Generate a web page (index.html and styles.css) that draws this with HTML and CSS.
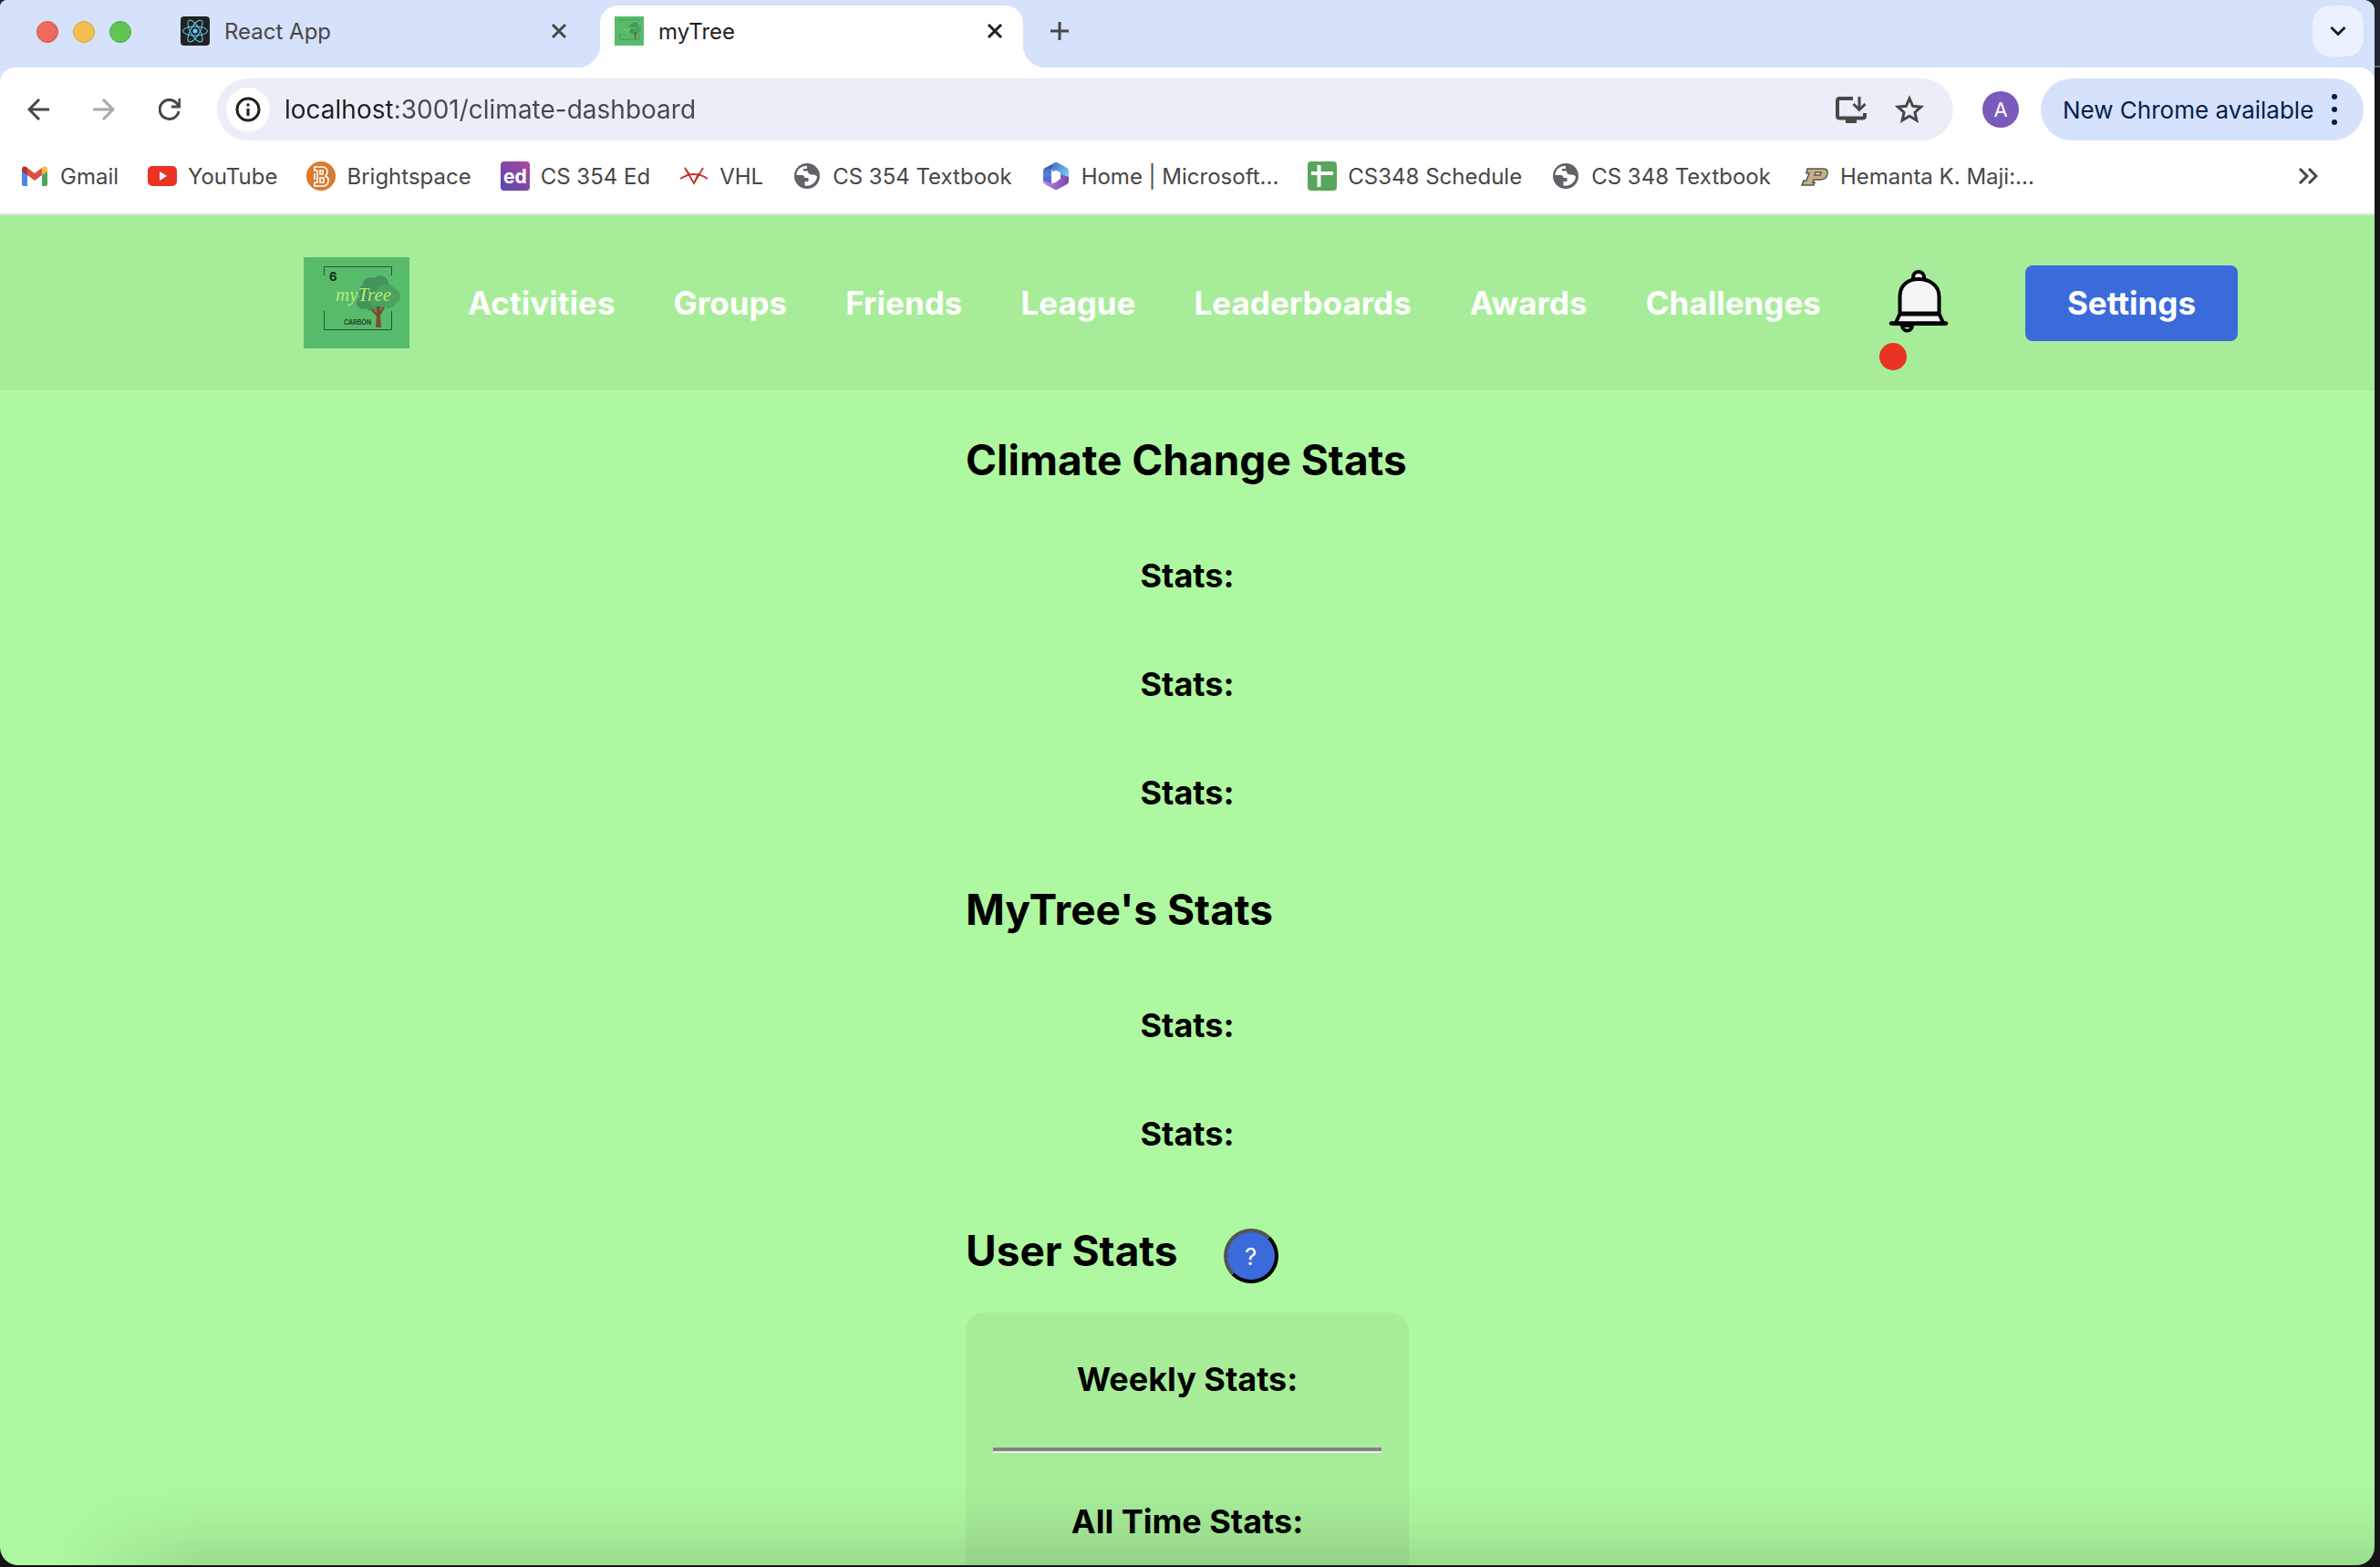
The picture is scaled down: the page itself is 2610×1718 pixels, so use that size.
FILE: index.html
```html
<!DOCTYPE html>
<html lang="en">
<head>
<meta charset="utf-8">
<meta name="viewport" content="width=device-width, initial-scale=1">
<title>myTree</title>
<link rel="stylesheet" href="styles.css">
</head>
<body>
<svg class="defs" width="0" height="0" aria-hidden="true">
  <symbol id="globe" viewBox="0 0 32 32">
    <circle cx="16" cy="16" r="14" fill="#5f6368"/>
    <path d="M14 5C8 6 4.500 10 4.500 15h6c2 0 3 1.500 3 3h4v4h-4v4.500c8 1 13-4 13.500-10-1.500-1.500-3-2-5-2-3 0-5-1-5-4h-5V8h4V5z" fill="#fff"/>
  </symbol>
  <symbol id="tree" viewBox="0 0 116 100" preserveAspectRatio="none">
    <rect width="116" height="100" fill="#58bb6c"/>
    <g fill="#43935a">
      <circle cx="73" cy="30" r="8"/><circle cx="84" cy="29" r="9"/><circle cx="68" cy="38" r="8"/><circle cx="65" cy="50" r="7"/><circle cx="76" cy="46" r="13"/>
    </g>
    <g fill="#4ba35f">
      <circle cx="90" cy="40" r="11"/><circle cx="97" cy="43" r="9"/><circle cx="93" cy="47" r="9"/><circle cx="80" cy="49" r="7"/>
    </g>
    <path d="M79 77l1-12-6-7 2-1 4 4v-7h4v5l3-5 2 1-5 9 1 13z" fill="#7a4b2c"/>
    <path d="M22.500 20V10.500H96.500V20M22.500 59V79.500H96.500V59" fill="none" stroke="#1d5a33" stroke-width="1"/>
  </symbol>
</svg>
<div class="window">
  <header class="chrome">
    <div class="tabstrip">
      <div class="lights"><span class="light red"></span><span class="light amber"></span><span class="light green"></span></div>
      <div class="tab">
        <svg class="favicon" viewBox="0 0 32 32" aria-hidden="true"><rect width="32" height="32" rx="4" fill="#222"/><g fill="none" stroke="#61dafb" stroke-width="1"><ellipse cx="16" cy="16" rx="13.500" ry="5"/><ellipse cx="16" cy="16" rx="13.500" ry="5" transform="rotate(60 16 16)"/><ellipse cx="16" cy="16" rx="13.500" ry="5" transform="rotate(120 16 16)"/></g><circle cx="16" cy="16" r="2.500" fill="#61dafb"/></svg>
        <span class="tab-title">React App</span>
        <button class="icon-button" aria-label="Close React App"><svg width="18" height="18" viewBox="0 0 18 18"><path d="M2 2l14 14M16 2L2 16" stroke="#474747" stroke-width="3"/></svg></button>
      </div>
      <div class="tab active">
        <svg class="favicon" aria-hidden="true"><use href="#tree"/><path d="M10 15q2-3 3 0t4-1 5 0" fill="none" stroke="#8ed873"/></svg>
        <span class="tab-title">myTree</span>
        <button class="icon-button" aria-label="Close myTree"><svg width="18" height="18" viewBox="0 0 18 18"><path d="M2 2l14 14M16 2L2 16" stroke="#1f1f1f" stroke-width="3"/></svg></button>
      </div>
      <button class="icon-button new-tab" aria-label="New tab"><svg width="20" height="20" viewBox="0 0 20 20"><path d="M10 0v20M0 10h20" stroke="#474747" stroke-width="3"/></svg></button>
      <button class="tab-search" aria-label="Search tabs"><svg width="20" height="20" viewBox="0 0 20 20"><path d="M2.500 6l7.500 7.500L17.500 6" fill="none" stroke="#1f1f1f" stroke-width="3"/></svg></button>
    </div>
    <div class="toolbar">
      <div class="history">
        <button class="icon-button" aria-label="Back"><svg width="24" height="24" viewBox="0 0 24 24"><path d="M24 12H2M13 1L2 12l11 11" fill="none" stroke="#474747" stroke-width="3"/></svg></button>
        <button class="icon-button" aria-label="Forward"><svg width="24" height="24" viewBox="0 0 24 24"><path d="M0 12h22M11 1l11 11-11 11" fill="none" stroke="#a8a8a8" stroke-width="3"/></svg></button>
        <button class="icon-button" aria-label="Reload"><svg width="24" height="24" viewBox="0 0 24 24"><path d="M22 14a10.500 10.500 0 1 1-2-8.500l3 3M23 0v9h-9" fill="none" stroke="#474747" stroke-width="3"/></svg></button>
      </div>
      <div class="omnibox">
        <button class="site-info" aria-label="Site information"><svg width="28" height="28" viewBox="0 0 28 28"><circle cx="14" cy="14" r="12" fill="none" stroke="#1f1f1f" stroke-width="3"/><path d="M14 13v8M14 7.500v3" stroke="#1f1f1f" stroke-width="3"/></svg></button>
        <input class="address" type="text" value="localhost:3001/climate-dashboard" aria-label="Address">
        <button class="icon-button" aria-label="Install"><svg width="34" height="32" viewBox="0 0 34 32"><path d="M19 4H4.500Q2 4 2 6.500v16.500Q2 25.500 4.500 25.500h25Q32 25.500 32 23v-3" fill="none" stroke="#474747" stroke-width="4"/><path d="M11 26h12v5H11z" fill="#474747"/><path d="M26 2v14M19.500 10l6.500 6.500 6.500-6.500" fill="none" stroke="#474747" stroke-width="3"/></svg></button>
        <button class="icon-button" aria-label="Bookmark"><svg width="32" height="32" viewBox="0 0 32 32"><path d="M16 4l3.700 8.300 9 .9-6.800 6 2 8.800-7.900-4.700L8.100 28l2-8.800-6.800-6 9-.9z" fill="none" stroke="#474747" stroke-width="3"/></svg></button>
      </div>
      <button class="avatar" aria-label="Profile">A</button>
      <button class="update">New Chrome available<svg width="8" height="34" viewBox="0 0 8 34"><g fill="#041e49"><circle cx="4" cy="3" r="3"/><circle cx="4" cy="17" r="3"/><circle cx="4" cy="31" r="3"/></g></svg></button>
    </div>
    <nav class="bookmarks" aria-label="Bookmarks">
      <a href="#"><svg viewBox="0 0 32 32"><path d="M2 8v17q0 2 2 2h4V14z" fill="#4c86ee"/><path d="M30 8v17q0 2-2 2h-4V14z" fill="#50a55a"/><path d="M8 7l8 6 8-6v8l-8 6-8-6z" fill="#dd5144"/><path d="M2 9q0-5 5-3l1 1v8l-6-4z" fill="#b5342a"/><path d="M30 9q0-5-5-3l-1 1v8l6-4z" fill="#f2bd42"/></svg>Gmail</a>
      <a href="#"><svg viewBox="0 0 32 32"><rect y="5" width="32" height="22" rx="5" fill="#ea3323"/><path d="M13 11l8 5-8 5z" fill="#fff"/></svg>YouTube</a>
      <a href="#"><svg viewBox="0 0 32 32"><circle cx="16" cy="16" r="16" fill="#d97b31"/><path d="M9 6h9q5 1 5 5 0 3-2 5 4 2 3 6-1 5-6 5H9v-4h3V10H9zM15 10v4h3v-4zM15 18v5h4v-5zM9 13v7" fill="none" stroke="#fff" stroke-width="1.600"/></svg>Brightspace</a>
      <a href="#"><svg viewBox="0 0 32 32"><defs><linearGradient id="ed" x1="0" y1="1" x2="1" y2="0"><stop stop-color="#5648b2"/><stop offset="1" stop-color="#ab499c"/></linearGradient></defs><rect width="32" height="32" rx="4" fill="url(#ed)"/><text x="3" y="24" font-size="21" font-weight="700" fill="#fff">ed</text></svg>CS 354 Ed</a>
      <a href="#"><svg viewBox="0 0 32 32" fill="none" stroke="#c4302b" stroke-width="1.800"><path d="M1 19q15-10 30 0M6 7l10 17L26 7M6 7l5 7M16 24l5-11"/></svg>VHL</a>
      <a href="#"><svg><use href="#globe"/></svg>CS 354 Textbook</a>
      <a href="#"><svg viewBox="0 0 32 32"><defs><linearGradient id="m1" x2="0" y2="1"><stop stop-color="#303f9f"/><stop offset=".5" stop-color="#4e83dc"/><stop offset="1" stop-color="#6b4fc4"/></linearGradient><linearGradient id="m2" x2="1" y2="1"><stop stop-color="#3f6fd0"/><stop offset="1" stop-color="#7fe0f5"/></linearGradient><linearGradient id="m3" x2="1" y2="0"><stop stop-color="#c58af0"/><stop offset="1" stop-color="#7047a5"/></linearGradient></defs><path d="M16 1L4 7q-2 1-2 4v11l9 4V11q0-4 5-6z" fill="url(#m1)"/><path d="M14 1.500q2-1 4 0L28 7q2 1 2 4v10l-9-7q0-3-5-4l-4 1V6z" fill="url(#m2)"/><path d="M2 21v1q0 2 2 3l10 5.500q2 1 4 0L28 25q2-1 2-4v-4l-9-3v4l-5 5-5 1z" fill="url(#m3)"/><path d="M16 10l5 3v6l-5 3-5-3v-6z" fill="#fff"/></svg>Home | Microsoft...</a>
      <a href="#"><svg viewBox="0 0 32 32"><rect width="32" height="32" rx="4" fill="#58a55c"/><path d="M12.500 4v24M4 13h24" stroke="#fff" stroke-width="4"/></svg>CS348 Schedule</a>
      <a href="#"><svg><use href="#globe"/></svg>CS 348 Textbook</a>
      <a href="#"><svg viewBox="0 0 32 32"><path d="M8 8h18q5 0 4 6t-8 6h-7l-1 3h2l-1 3H2l2-5h3l3-8H7zM17 12l-1 3h6l1-3z" fill="#c5b083" fill-rule="evenodd" stroke="#555" stroke-width="1.500"/></svg>Hemanta K. Maji:...</a>
      <button class="icon-button overflow" aria-label="More bookmarks"><svg width="22" height="18" viewBox="0 0 22 18"><path d="M2 1l8 8-8 8M12 1l8 8-8 8" fill="none" stroke="#474747" stroke-width="3"/></svg></button>
    </nav>
  </header>
  <div class="page">
    <nav class="navbar" aria-label="Main">
      <a href="#" class="logo" aria-label="myTree home"><svg width="116" height="100"><use href="#tree"/><text x="28" y="26" font-size="13" font-weight="700" fill="#0d2d18">6</text><text x="35" y="48" class="script" font-size="21" fill="#b4ee78">myTree</text><text x="44" y="74" font-size="7" font-weight="600" fill="#14401f">CARBON</text></svg></a>
      <a href="#">Activities</a>
      <a href="#">Groups</a>
      <a href="#">Friends</a>
      <a href="#">League</a>
      <a href="#">Leaderboards</a>
      <a href="#">Awards</a>
      <a href="#">Challenges</a>
      <button class="bell" aria-label="Notifications">
        <svg width="96" height="84" viewBox="0 0 96 84"><path d="M37 16v-2a6 6 0 0 1 12 0v2" fill="#f4f4f4" stroke="#000" stroke-width="4"/><path d="M22.500 54V35C22.500 23 31 16 43 16s22.500 7 22.500 19v19l5 11H17.500z" fill="#f4f4f4" stroke="#000" stroke-width="4"/><path d="M22 54h44" stroke="#000" stroke-width="5"/><path d="M25 67a5.500 5.500 0 0 0 11 0z" fill="#f4f4f4" stroke="#000" stroke-width="4"/><path d="M13 64.500h60" stroke="#000" stroke-width="4.500" stroke-linecap="round"/></svg>
        <span class="badge"></span>
      </button>
      <button class="settings">Settings</button>
    </nav>
    <main class="stats">
      <h2>Climate Change Stats</h2>
      <h3>Stats:</h3>
      <h3>Stats:</h3>
      <h3>Stats:</h3>
      <h2>MyTree's Stats</h2>
      <h3>Stats:</h3>
      <h3>Stats:</h3>
      <div class="user-heading"><h2>User Stats</h2><button class="help" aria-label="Help">?</button></div>
      <section class="card">
        <h3>Weekly Stats:</h3>
        <hr>
        <h3>All Time Stats:</h3>
      </section>
    </main>
  </div>
  <div class="shade"></div>
</div>
</body>
</html>
```
FILE: styles.css
```css
* { box-sizing: border-box; }

body {
  margin: 0;
  height: 100vh;
  overflow: hidden;
  padding: 0 6px 2px 0;
  background: linear-gradient(#23272f 72px, #666 72px, #666 74px, #151515 74px);
  font-family: Inter, "Liberation Sans", sans-serif;
}

button, input { font: inherit; border: 0; padding: 0; background: none; }
button { cursor: pointer; }
a { text-decoration: none; }
svg { display: block; flex: none; }
.defs { position: absolute; }
.script { font-family: "Liberation Serif", serif; font-style: italic; font-weight: 400; }

.window {
  position: relative;
  display: flex;
  flex-direction: column;
  height: 100%;
  overflow: hidden;
  border-radius: 8px 12px 20px 20px;
  background: #aef8a1;
}

.icon-button { display: flex; align-items: center; justify-content: center; }

/* Tab strip */
.chrome { flex: none; background: #d6e1fc; }

.tabstrip { display: flex; height: 74px; padding: 6px 12px 0 40px; }
.lights { display: flex; gap: 16px; padding-top: 17px; }
.light { width: 24px; height: 24px; border-radius: 50%; }
.red { background: #ec6a5e; border: 1px solid #d5544a; }
.amber { background: #f4bf4f; border: 1px solid #d9a23c; }
.green { background: #61c554; border: 1px solid #4fa73f; }

.tab {
  display: flex;
  align-items: center;
  width: 460px;
  height: 56px;
  margin-left: 38px;
  padding: 0 12px 0 16px;
  color: #474747;
  font-size: 24px;
}
.tab .icon-button { width: 34px; height: 34px; }
.favicon { width: 32px; height: 32px; margin-right: 16px; }
.tab-title { flex: 1; }
.tab.active {
  position: relative;
  width: 464px;
  height: 68px;
  margin-left: 16px;
  padding: 0 14px 12px 16px;
  border-radius: 20px 20px 0 0;
  background: #fff;
  color: #1f1f1f;
}
.tab.active::before, .tab.active::after {
  content: "";
  position: absolute;
  bottom: 0;
  width: 24px;
  height: 24px;
}
.tab.active::before { right: 100%; background: radial-gradient(circle at 0 0, transparent 24px, #fff 24px); }
.tab.active::after { left: 100%; background: radial-gradient(circle at 100% 0, transparent 24px, #fff 24px); }
.new-tab { width: 56px; height: 56px; margin-left: 12px; }
.tab-search {
  display: grid;
  place-items: center;
  width: 56px;
  height: 56px;
  margin-left: auto;
  border-radius: 20px;
  background: #ebf2fd;
}

/* Toolbar */
.toolbar {
  display: flex;
  align-items: center;
  height: 92px;
  padding: 0 12px;
  border-radius: 16px 16px 0 0;
  background: #fff;
}
.history { display: flex; width: 226px; gap: 12px; }
.history .icon-button { width: 60px; height: 60px; }
.omnibox {
  display: flex;
  flex: 1;
  align-items: center;
  height: 68px;
  padding: 0 24px 0 10px;
  border-radius: 34px;
  background: #ebeef7;
}
.omnibox .icon-button { width: 64px; height: 48px; }
.site-info { display: grid; place-items: center; width: 48px; height: 48px; border-radius: 50%; background: #fff; }
.address {
  flex: 1;
  min-width: 0;
  margin-left: 16px;
  outline: 0;
  font-size: 28px;
  color: transparent;
  background: linear-gradient(to right, #1f1f1f 118px, #474747 118px);
  -webkit-background-clip: text;
  background-clip: text;
}
.omnibox .icon-button:last-child { width: 48px; margin-left: 8px; }
.avatar { width: 40px; height: 40px; margin: 0 24px 0 32px; border-radius: 50%; background: #7a5abb; color: #fff; font-size: 22px; }
.update {
  display: flex;
  align-items: center;
  justify-content: space-between;
  width: 354px;
  height: 68px;
  padding: 0 28px 0 24px;
  border-radius: 34px;
  background: #d6e1fc;
  color: #041e49;
  font-size: 26px;
}

/* Bookmarks bar */
.bookmarks {
  display: flex;
  align-items: center;
  height: 70px;
  gap: 32px;
  padding: 0 62px 14px 22px;
  border-bottom: 2px solid #dfe0e3;
  background: #fff;
}
.bookmarks a { display: flex; align-items: center; gap: 12px; color: #474747; font-size: 24px; white-space: nowrap; }
.bookmarks a svg { width: 32px; height: 32px; }
.overflow { margin-left: auto; }

/* Site */
.page { flex: 1; min-height: 0; overflow: hidden; }
.navbar {
  display: flex;
  align-items: center;
  justify-content: space-between;
  height: 192px;
  padding: 0 150px 0 333px;
  background: #a7ed99;
}
.navbar a { color: #fff; font-size: 35px; font-weight: 700; }
.bell { position: relative; width: 96px; height: 84px; }
.badge { position: absolute; left: 0; top: 86px; width: 30px; height: 30px; border-radius: 50%; background: #ea3323; }
.settings { width: 233px; height: 83px; border-radius: 8px; background: #3b6bdb; color: #fff; font-size: 35px; font-weight: 700; }

.stats { display: flex; flex-direction: column; width: 486px; margin: 0 auto; padding-top: 8px; }
h2, h3 { color: #000; white-space: nowrap; font-weight: 700; }
h2 { margin: 40px 0; font-size: 46px; line-height: 56px; }
h3 { margin: 37px 0; font-size: 36px; line-height: 45px; text-align: center; }
.user-heading { display: flex; align-items: center; gap: 50px; }
.help {
  width: 60px;
  height: 60px;
  margin-top: 12px;
  border: 4px outset #000;
  border-radius: 50%;
  background: #3b6bdb;
  color: #fff;
  font-size: 26px;
}
.card { display: flex; flex-direction: column; padding: 14px 30px; border-radius: 20px; background: #a7ed99; }
hr { width: 100%; height: 6px; margin: 15px 0 16px; border: 0; border-top: 4px solid #828282; border-bottom: 2px solid #eee; }

/* Soft shadow along the window's lower edge */
.shade {
  position: absolute;
  inset: auto 0 0 0;
  height: 90px;
  pointer-events: none;
  background: linear-gradient(transparent, rgba(0, 0, 0, .03) 45%, rgba(0, 0, 0, .11));
  -webkit-mask-image: linear-gradient(to right, transparent 60px, #000 220px);
  mask-image: linear-gradient(to right, transparent 60px, #000 220px);
}
```
